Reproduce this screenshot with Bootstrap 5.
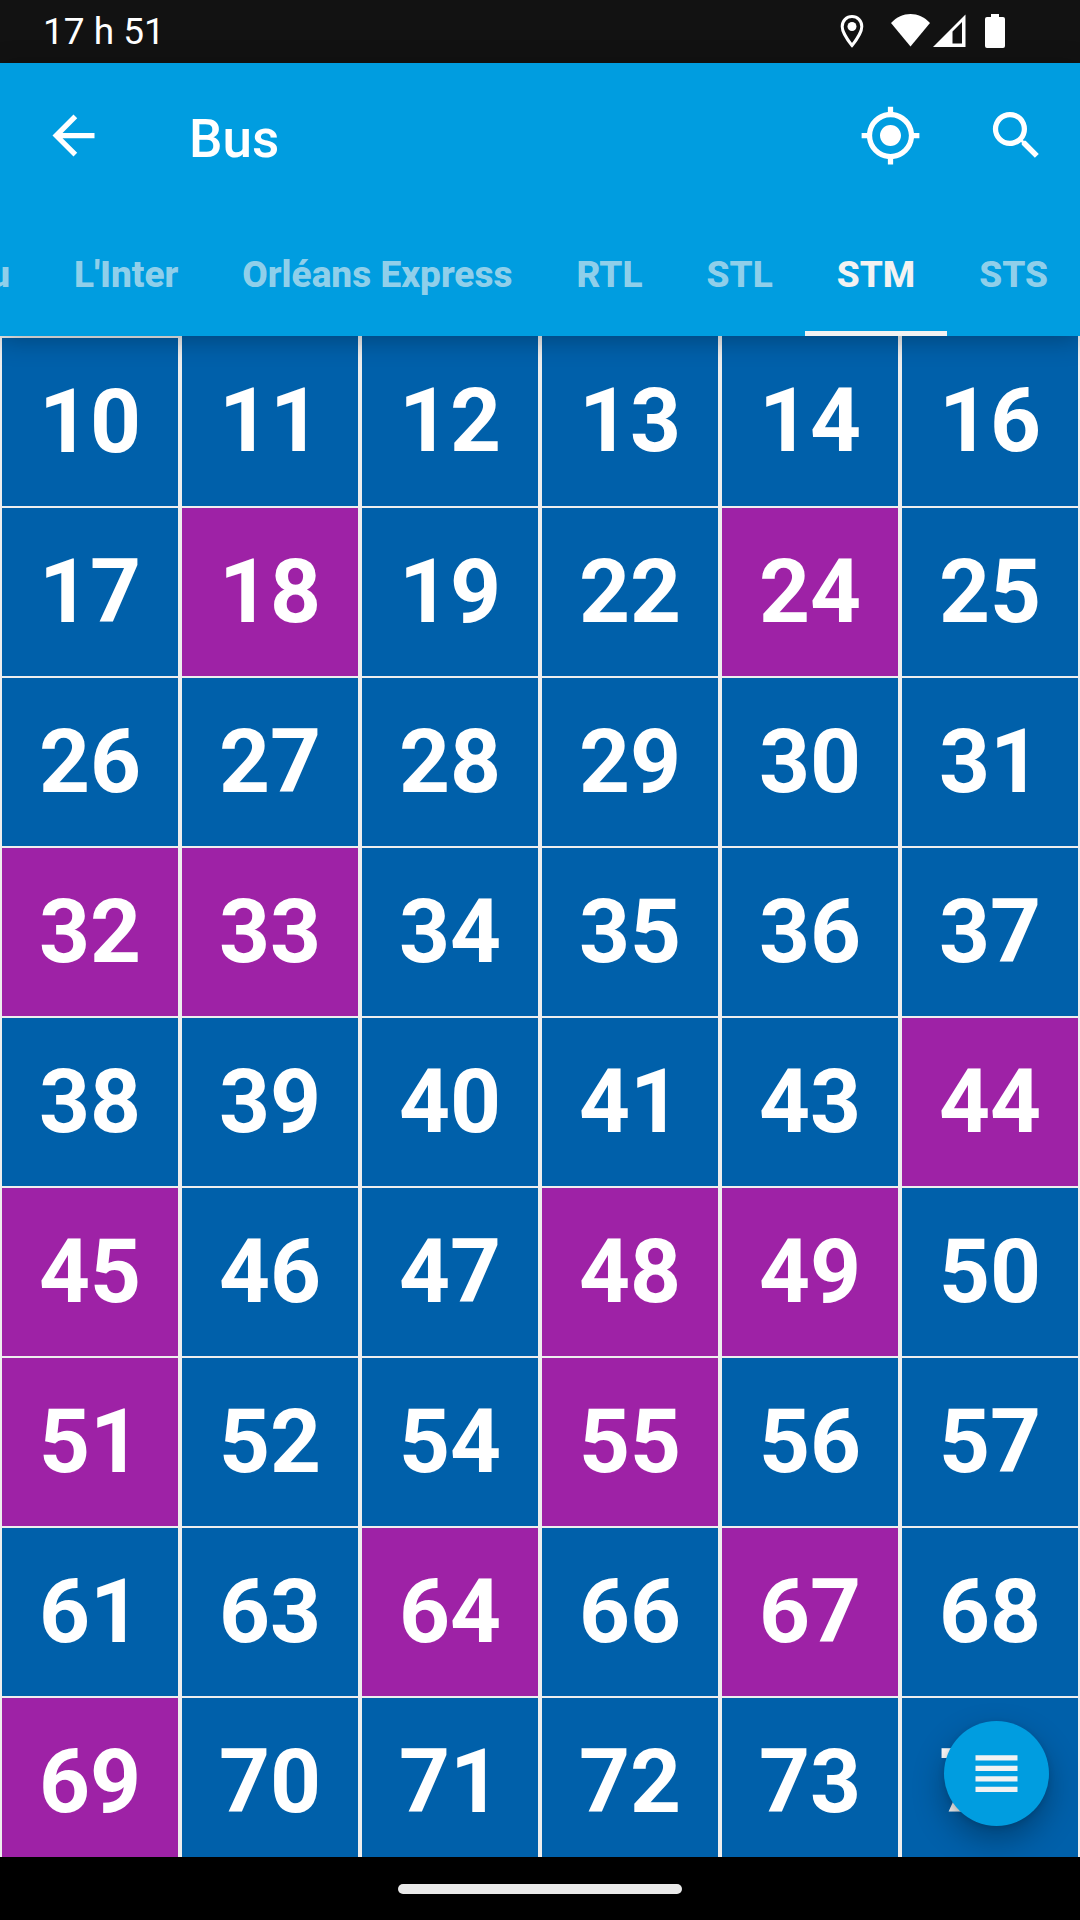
<!DOCTYPE html>
<html lang="fr">
<head>
<meta charset="utf-8">
<meta name="viewport" content="width=device-width, initial-scale=1">
<title>Bus</title>
<link href="https://cdn.jsdelivr.net/npm/bootstrap@5.3.0/dist/css/bootstrap.min.css" rel="stylesheet">
<style>
  body { font-family: Roboto, "Noto Sans", sans-serif; background: #eee; }
  svg { display: block; fill: currentColor; }
  .status-bar { height: 63px; padding: 0 75px 0 43px; background: #121212; font-size: 37px; }
  .status-pin { margin-right: 27px; }
  .status-wifi { margin-right: 3px; }
  .status-signal { margin-right: 19px; }
  .app-header { background: #009de0; box-shadow: 0 4px 24px rgba(0, 0, 0, .28); z-index: 2; }
  .toolbar-row { height: 147px; padding: 0 1px 2px 0; }
  .tool-btn { width: 126px; height: 126px; border: 0; background: none; color: #fff; }
  .back-btn { width: 147px; }
  .app-title { margin: 0 0 0 42px; padding-top: 8px; font-size: 53px; font-weight: 500; line-height: 63px; }
  .agency-tabs { height: 126px; }
  .agency-tab { padding: 4px 32px 0; font-size: 37px; font-weight: 800; color: rgba(242, 242, 242, .62); border-top: 5px solid transparent; border-bottom: 5px solid transparent; }
  .agency-tab.active { color: #f2f2f2; border-bottom-color: #f2f2f2; }
  .route { padding: 31px 0; border: 2px solid #eee; border-top-width: 0; background: #0060aa; color: #fff; font-size: 89px; font-weight: 700; line-height: 106px; }
  .route:first-child { border-top-width: 2px; }
  .route.express { background: #9e22a6; }
  .list-fab { width: 105px; height: 105px; right: 31px; bottom: 31px; border: 0; background: #009de0; color: #f2f2f2; box-shadow: 0 14px 32px rgba(0, 0, 0, .3), 0 2px 6px rgba(0, 0, 0, .12); }
  .gesture-bar { height: 63px; }
  .gesture-pill { width: 284px; height: 10px; background: #eaeaea; }
</style>
<script src="https://cdn.jsdelivr.net/npm/bootstrap@5.3.0/dist/js/bootstrap.bundle.min.js"></script>
</head>
<body>
<div class="d-flex flex-column vh-100 overflow-hidden">
  <div class="status-bar d-flex align-items-center flex-shrink-0 text-white">
    <span class="me-auto">17 h 51</span>
    <svg class="status-pin" width="24" height="35" viewBox="0 0 24 35" aria-hidden="true"><path d="M12 2.500C6.500 2.500 2.200 6.800 2.200 12.500c0 7 9.800 19 9.800 19s9.800-12 9.800-19C21.800 6.800 17.500 2.500 12 2.500z" fill="none" stroke="#fff" stroke-width="3"/><circle cx="12" cy="12.500" r="4.500"/></svg>
    <svg class="status-wifi" width="39" height="35" viewBox="0 0 39 35" aria-hidden="true"><path d="M0 9C11-3 28-3 39 9L19.500 32.500z"/></svg>
    <svg class="status-signal" width="33" height="35" viewBox="0 0 33 35" aria-hidden="true"><path fill-rule="evenodd" d="M0 33L32.500 .5V33zM19.500 17.500v12h9.500V8z"/></svg>
    <svg width="20" height="35" viewBox="0 0 20 35" aria-hidden="true"><path d="M6 0h8v3h4q2 0 2 2v27q0 2-2 2H2q-2 0-2-2V5q0-2 2-2h4z"/></svg>
  </div>

  <header class="app-header position-relative flex-shrink-0 text-white">
    <div class="toolbar-row d-flex align-items-center">
      <button type="button" class="tool-btn back-btn p-0 d-flex align-items-center justify-content-center" aria-label="Retour">
        <svg width="63" height="63" viewBox="0 0 24 24"><path d="M20 11H7.830l5.590-5.590L12 4l-8 8 8 8 1.410-1.410L7.830 13H20z"/></svg>
      </button>
      <h1 class="app-title me-auto">Bus</h1>
      <button type="button" class="tool-btn p-0 d-flex align-items-center justify-content-center" aria-label="Ma position">
        <svg width="63" height="63" viewBox="0 0 24 24"><path d="M12 8c-2.210 0-4 1.790-4 4s1.790 4 4 4 4-1.790 4-4-1.790-4-4-4zm8.940 3A8.994 8.994 0 0 0 13 3.060V1h-2v2.060A8.994 8.994 0 0 0 3.060 11H1v2h2.060A8.994 8.994 0 0 0 11 20.940V23h2v-2.060A8.994 8.994 0 0 0 20.940 13H23v-2zM12 19c-3.870 0-7-3.130-7-7s3.130-7 7-7 7 3.130 7 7-3.130 7-7 7z"/></svg>
      </button>
      <button type="button" class="tool-btn p-0 d-flex align-items-center justify-content-center" aria-label="Rechercher">
        <svg width="63" height="63" viewBox="0 0 24 24"><path d="M15.500 14h-.79l-.28-.27A6.471 6.471 0 0 0 16 9.500 6.500 6.500 0 1 0 9.500 16c1.610 0 3.090-.59 4.230-1.570l.27.28v.79l5 4.990L20.490 19zm-6 0C7.010 14 5 11.990 5 9.500S7.010 5 9.500 5 14 7.010 14 9.500 11.990 14 9.500 14z"/></svg>
      </button>
    </div>
    <nav class="agency-tabs d-flex justify-content-end overflow-hidden text-nowrap">
      <a href="#" class="agency-tab d-flex align-items-center text-decoration-none">u</a>
      <a href="#" class="agency-tab d-flex align-items-center text-decoration-none">L'Inter</a>
      <a href="#" class="agency-tab d-flex align-items-center text-decoration-none">Orléans Express</a>
      <a href="#" class="agency-tab d-flex align-items-center text-decoration-none">RTL</a>
      <a href="#" class="agency-tab d-flex align-items-center text-decoration-none">STL</a>
      <a href="#" class="agency-tab active d-flex align-items-center text-decoration-none" aria-current="page">STM</a>
      <a href="#" class="agency-tab d-flex align-items-center text-decoration-none">STS</a>
    </nav>
  </header>

  <main class="position-relative flex-grow-1 overflow-hidden">
    <div class="routes row row-cols-6 g-0">
      <a href="#" class="route d-flex align-items-center justify-content-center text-decoration-none">10</a>
      <a href="#" class="route d-flex align-items-center justify-content-center text-decoration-none">11</a>
      <a href="#" class="route d-flex align-items-center justify-content-center text-decoration-none">12</a>
      <a href="#" class="route d-flex align-items-center justify-content-center text-decoration-none">13</a>
      <a href="#" class="route d-flex align-items-center justify-content-center text-decoration-none">14</a>
      <a href="#" class="route d-flex align-items-center justify-content-center text-decoration-none">16</a>
      <a href="#" class="route d-flex align-items-center justify-content-center text-decoration-none">17</a>
      <a href="#" class="route express d-flex align-items-center justify-content-center text-decoration-none">18</a>
      <a href="#" class="route d-flex align-items-center justify-content-center text-decoration-none">19</a>
      <a href="#" class="route d-flex align-items-center justify-content-center text-decoration-none">22</a>
      <a href="#" class="route express d-flex align-items-center justify-content-center text-decoration-none">24</a>
      <a href="#" class="route d-flex align-items-center justify-content-center text-decoration-none">25</a>
      <a href="#" class="route d-flex align-items-center justify-content-center text-decoration-none">26</a>
      <a href="#" class="route d-flex align-items-center justify-content-center text-decoration-none">27</a>
      <a href="#" class="route d-flex align-items-center justify-content-center text-decoration-none">28</a>
      <a href="#" class="route d-flex align-items-center justify-content-center text-decoration-none">29</a>
      <a href="#" class="route d-flex align-items-center justify-content-center text-decoration-none">30</a>
      <a href="#" class="route d-flex align-items-center justify-content-center text-decoration-none">31</a>
      <a href="#" class="route express d-flex align-items-center justify-content-center text-decoration-none">32</a>
      <a href="#" class="route express d-flex align-items-center justify-content-center text-decoration-none">33</a>
      <a href="#" class="route d-flex align-items-center justify-content-center text-decoration-none">34</a>
      <a href="#" class="route d-flex align-items-center justify-content-center text-decoration-none">35</a>
      <a href="#" class="route d-flex align-items-center justify-content-center text-decoration-none">36</a>
      <a href="#" class="route d-flex align-items-center justify-content-center text-decoration-none">37</a>
      <a href="#" class="route d-flex align-items-center justify-content-center text-decoration-none">38</a>
      <a href="#" class="route d-flex align-items-center justify-content-center text-decoration-none">39</a>
      <a href="#" class="route d-flex align-items-center justify-content-center text-decoration-none">40</a>
      <a href="#" class="route d-flex align-items-center justify-content-center text-decoration-none">41</a>
      <a href="#" class="route d-flex align-items-center justify-content-center text-decoration-none">43</a>
      <a href="#" class="route express d-flex align-items-center justify-content-center text-decoration-none">44</a>
      <a href="#" class="route express d-flex align-items-center justify-content-center text-decoration-none">45</a>
      <a href="#" class="route d-flex align-items-center justify-content-center text-decoration-none">46</a>
      <a href="#" class="route d-flex align-items-center justify-content-center text-decoration-none">47</a>
      <a href="#" class="route express d-flex align-items-center justify-content-center text-decoration-none">48</a>
      <a href="#" class="route express d-flex align-items-center justify-content-center text-decoration-none">49</a>
      <a href="#" class="route d-flex align-items-center justify-content-center text-decoration-none">50</a>
      <a href="#" class="route express d-flex align-items-center justify-content-center text-decoration-none">51</a>
      <a href="#" class="route d-flex align-items-center justify-content-center text-decoration-none">52</a>
      <a href="#" class="route d-flex align-items-center justify-content-center text-decoration-none">54</a>
      <a href="#" class="route express d-flex align-items-center justify-content-center text-decoration-none">55</a>
      <a href="#" class="route d-flex align-items-center justify-content-center text-decoration-none">56</a>
      <a href="#" class="route d-flex align-items-center justify-content-center text-decoration-none">57</a>
      <a href="#" class="route d-flex align-items-center justify-content-center text-decoration-none">61</a>
      <a href="#" class="route d-flex align-items-center justify-content-center text-decoration-none">63</a>
      <a href="#" class="route express d-flex align-items-center justify-content-center text-decoration-none">64</a>
      <a href="#" class="route d-flex align-items-center justify-content-center text-decoration-none">66</a>
      <a href="#" class="route express d-flex align-items-center justify-content-center text-decoration-none">67</a>
      <a href="#" class="route d-flex align-items-center justify-content-center text-decoration-none">68</a>
      <a href="#" class="route express d-flex align-items-center justify-content-center text-decoration-none">69</a>
      <a href="#" class="route d-flex align-items-center justify-content-center text-decoration-none">70</a>
      <a href="#" class="route d-flex align-items-center justify-content-center text-decoration-none">71</a>
      <a href="#" class="route d-flex align-items-center justify-content-center text-decoration-none">72</a>
      <a href="#" class="route d-flex align-items-center justify-content-center text-decoration-none">73</a>
      <a href="#" class="route d-flex align-items-center justify-content-center text-decoration-none">74</a>
    </div>
    <button type="button" class="list-fab position-absolute rounded-circle p-0 d-flex align-items-center justify-content-center" aria-label="Afficher en liste">
      <svg width="63" height="63" viewBox="0 0 24 24"><path d="M4 5h16v2H4zM4 9h16v2H4zM4 13h16v2H4zM4 17h16v2H4z"/></svg>
    </button>
  </main>

  <div class="gesture-bar d-flex align-items-center justify-content-center flex-shrink-0 bg-black">
    <div class="gesture-pill rounded-pill"></div>
  </div>
</div>
</body>
</html>
